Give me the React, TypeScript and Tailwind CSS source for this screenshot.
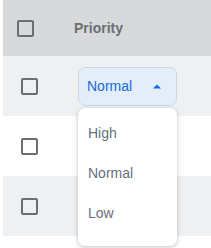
import React from "react";

function Box({ className = "" }: { className?: string }) {
  return <div className={"w-[17px] h-[17px] border-2 border-[#6d6e70] rounded-[2px] " + className} />;
}

export default function App() {
  const font = { fontFamily: '"Liberation Sans", Arial, sans-serif' };
  return (
    <div className="w-[211px] h-[248px] bg-white pl-[3px] overflow-hidden" style={font}>
      <div className="flex flex-col">
        <div className="h-[56px] bg-[#d8d9da] flex items-center">
          <div className="w-[71px] pl-[14px]">
            <Box />
          </div>
          <div className="text-[14px] font-bold text-[#6c6f73]">Priority</div>
        </div>
        <div className="h-[60px] bg-[#eff0f1] flex items-center">
          <div className="w-[75px] pl-[18px]">
            <Box />
          </div>
          <div className="relative">
            <div className="w-[99px] h-[39px] rounded-[7px] bg-[#e4eefb] border border-[#cdd6e1] flex items-center justify-between pl-[8px] pr-[15px]">
              <span className="text-[14px] text-[#1768d6]">Normal</span>
              <svg width="8" height="5" viewBox="0 0 8 5">
                <path d="M0 4.5 L4 0.5 L8 4.5 Z" fill="#1768d6" />
              </svg>
            </div>
            <div className="absolute left-0 top-[41px] w-[99px] h-[138px] bg-white rounded-[7px] shadow-[0_1px_4px_rgba(0,0,0,0.25)] z-10 flex flex-col pt-[6px] pl-[10px] text-[14px] text-[#66707d]">
              <div className="h-[40px] flex items-center">High</div>
              <div className="h-[40px] flex items-center">Normal</div>
              <div className="h-[40px] flex items-center">Low</div>
            </div>
          </div>
        </div>
        <div className="h-[60px] bg-white flex items-center">
          <div className="w-[75px] pl-[18px]">
            <Box />
          </div>
        </div>
        <div className="h-[60px] bg-[#eff0f1] flex items-center">
          <div className="w-[75px] pl-[18px]">
            <Box />
          </div>
        </div>
      </div>
    </div>
  );
}
